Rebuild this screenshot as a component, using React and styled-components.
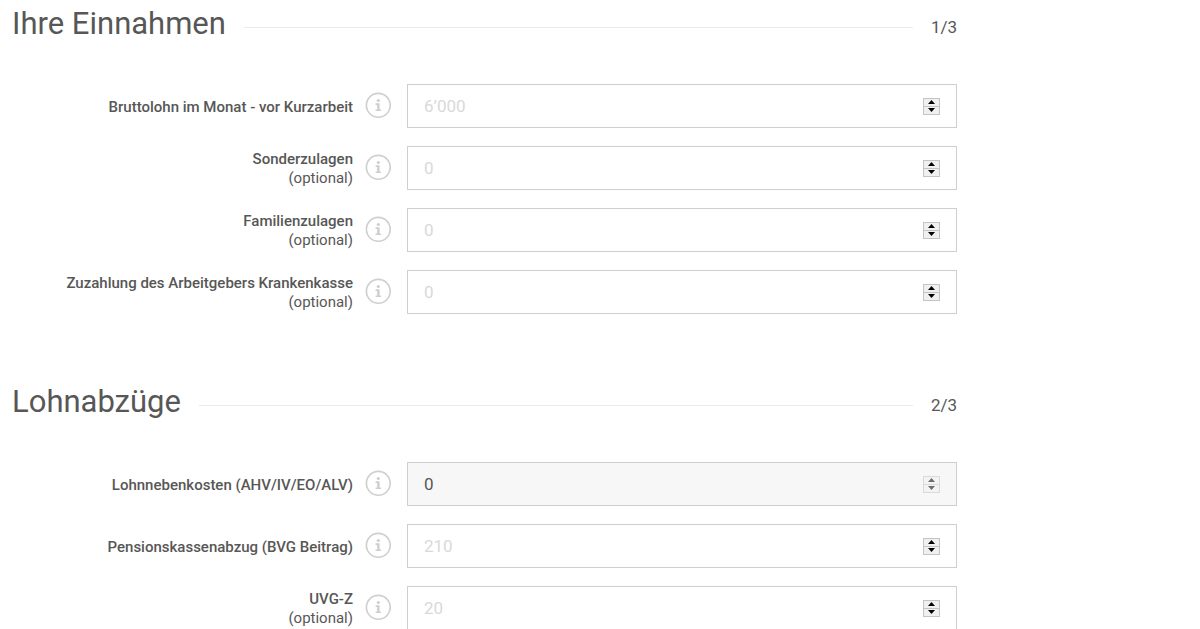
import React, { useState } from 'react';
import styled, { createGlobalStyle } from 'styled-components';

const GlobalStyle = createGlobalStyle`
  *, *::before, *::after {
    box-sizing: border-box;
  }

  body {
    margin: 0;
    background: #fff;
    color: #575756;
    font-family: Roboto, "Liberation Sans", sans-serif;
    font-size: 15px;
  }
`;

const Form = styled.form`
  max-width: 969px;
  padding: 0 12px;
`;

const Section = styled.section`
  padding-bottom: 64px;
`;

const SectionHeader = styled.header`
  display: flex;
  align-items: center;
  height: 46px;
  margin-bottom: 38px;
`;

const Title = styled.h2`
  margin: 0;
  padding-top: 2px;
  font-size: 31px;
  font-weight: 400;
  line-height: 44px;
`;

const Line = styled.span`
  flex: 1;
  height: 1px;
  margin: 8px 18px 0;
  background: #ebebeb;
`;

const Step = styled.span`
  padding-top: 8px;
  font-size: 17px;
  line-height: 24px;
`;

const Rows = styled.div`
  display: grid;
  gap: 18px;
`;

const Row = styled.div`
  display: grid;
  grid-template-columns: minmax(0, 341px) 38px minmax(0, 1fr);
  align-items: center;
`;

const Label = styled.label`
  padding-top: 2px;
  font-weight: 500;
  line-height: 19px;
  text-align: right;
`;

const Optional = styled.span`
  display: block;
  font-weight: 400;
`;

const InfoButton = styled.button`
  display: block;
  width: 26px;
  height: 28px;
  margin-left: 12px;
  padding: 0 0 2px;
  border: 0;
  background: none;
  color: #cfcfcf;
  cursor: pointer;

  svg {
    display: block;
  }
`;

const Field = styled.div`
  display: flex;
  align-items: center;
  height: 44px;
  margin-left: 16px;
  padding: 0 16px;
  border: 1px solid #cfcfcf;
  background: ${props => (props.$disabled ? '#f7f7f7' : '#fff')};
`;

const Input = styled.input`
  flex: 1;
  min-width: 0;
  height: 100%;
  padding: 0;
  border: 0;
  outline: 0;
  background: transparent;
  color: #575756;
  font: inherit;
  font-size: 17px;

  &::placeholder {
    color: #d9d9d9;
    opacity: 1;
  }
`;

const Spinner = styled.div`
  display: grid;
  width: 17px;
  opacity: ${props => (props.$disabled ? 0.55 : 1)};
`;

const SpinButton = styled.button`
  display: flex;
  align-items: center;
  justify-content: center;
  height: 9px;
  padding: 0;
  border: 1px solid #c4c4c4;
  background: #f0f0f0;
  color: #000;

  & + & {
    margin-top: -1px;
  }
`;

function InfoIcon() {
  return (
    <svg width="26" height="26" viewBox="0 0 26 26" fill="none" aria-hidden="true">
      <circle cx="13.3" cy="13.3" r="11.9" stroke="currentColor" strokeWidth="1.6" />
      <circle cx="13.3" cy="8.5" r="1.6" fill="currentColor" />
      <path d="M10.6 11.3H14.6V17.5H16.1V19.1H10.6V17.5H12.1V12.9H10.6Z" fill="currentColor" />
    </svg>
  );
}

function Arrow({ down }) {
  return (
    <svg width="7" height="4" viewBox="0 0 7 4" aria-hidden="true">
      <path d={down ? 'M0 0H7L3.5 4Z' : 'M0 4H7L3.5 0Z'} fill="currentColor" />
    </svg>
  );
}

function NumberRow({ id, label, optional, placeholder, initial = '', disabled }) {
  const [value, setValue] = useState(initial);
  const step = amount => setValue(String(Math.max(0, (Number(value) || 0) + amount)));

  return (
    <Row>
      <Label htmlFor={id}>
        {label}
        {optional && <Optional>(optional)</Optional>}
      </Label>
      <InfoButton type="button" aria-label={`Info: ${label}`}>
        <InfoIcon />
      </InfoButton>
      <Field $disabled={disabled}>
        <Input
          id={id}
          type="text"
          inputMode="numeric"
          placeholder={placeholder}
          value={value}
          disabled={disabled}
          onChange={e => setValue(e.target.value)}
        />
        <Spinner $disabled={disabled}>
          <SpinButton type="button" aria-label="Erhöhen" disabled={disabled} onClick={() => step(1)}>
            <Arrow />
          </SpinButton>
          <SpinButton type="button" aria-label="Verringern" disabled={disabled} onClick={() => step(-1)}>
            <Arrow down />
          </SpinButton>
        </Spinner>
      </Field>
    </Row>
  );
}

const sections = [
  {
    title: 'Ihre Einnahmen',
    step: '1/3',
    fields: [
      { id: 'bruttolohn', label: 'Bruttolohn im Monat - vor Kurzarbeit', placeholder: '6’000' },
      { id: 'sonderzulagen', label: 'Sonderzulagen', optional: true, placeholder: '0' },
      { id: 'familienzulagen', label: 'Familienzulagen', optional: true, placeholder: '0' },
      { id: 'krankenkasse', label: 'Zuzahlung des Arbeitgebers Krankenkasse', optional: true, placeholder: '0' },
    ],
  },
  {
    title: 'Lohnabzüge',
    step: '2/3',
    fields: [
      { id: 'lohnnebenkosten', label: 'Lohnnebenkosten (AHV/IV/EO/ALV)', initial: '0', disabled: true },
      { id: 'pensionskasse', label: 'Pensionskassenabzug (BVG Beitrag)', placeholder: '210' },
      { id: 'uvgz', label: 'UVG-Z', optional: true, placeholder: '20' },
    ],
  },
];

function App() {
  return (
    <>
      <GlobalStyle />
      <Form>
        {sections.map(section => (
          <Section key={section.step}>
            <SectionHeader>
              <Title>{section.title}</Title>
              <Line />
              <Step>{section.step}</Step>
            </SectionHeader>
            <Rows>
              {section.fields.map(field => (
                <NumberRow key={field.id} {...field} />
              ))}
            </Rows>
          </Section>
        ))}
      </Form>
    </>
  );
}

export default App;
